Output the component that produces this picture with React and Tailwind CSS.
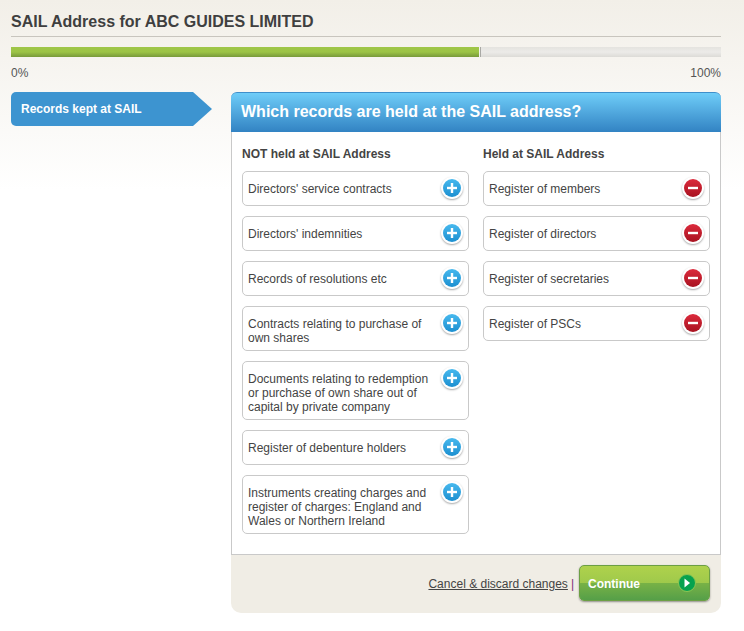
import React from 'react';

const NOT_HELD = [
  "Directors' service contracts",
  "Directors' indemnities",
  'Records of resolutions etc',
  'Contracts relating to purchase of own shares',
  'Documents relating to redemption or purchase of own share out of capital by private company',
  'Register of debenture holders',
  'Instruments creating charges and register of charges: England and Wales or Northern Ireland',
];

const HELD = ['Register of members', 'Register of directors', 'Register of secretaries', 'Register of PSCs'];

function RoundIcon({ type }) {
  const isAdd = type === 'add';
  return (
    <span className="mb-[1px] flex h-[22px] w-[22px] shrink-0 items-center justify-center rounded-full bg-white shadow-[0_1px_2px_rgba(0,0,0,0.35)]">
      <span className={`flex h-[18px] w-[18px] items-center justify-center rounded-full ${isAdd ? 'bg-gradient-to-b from-[#47b9ee] to-[#1b8fd0]' : 'bg-gradient-to-b from-[#dc2a3c] to-[#a81220]'}`}>
        <svg width="12" height="12" viewBox="0 0 12 12">
          {isAdd && <rect x="4.8" y="1" width="2.4" height="10" fill="#fff" />}
          <rect x="1" y="4.8" width="10" height="2.4" fill="#fff" />
        </svg>
      </span>
    </span>
  );
}

function RecordCard({ label, type }) {
  return (
    <div className="flex items-start justify-between rounded-[5px] border border-[#c9c9c9] bg-white pt-[5px] pr-[5px] pb-[5px] pl-[5px]">
      <span className="w-[186px] pt-[5px] text-[12px] leading-[14px] text-[#444]">{label}</span>
      <RoundIcon type={type} />
    </div>
  );
}

export default function App() {
  return (
    <div className="h-[631px] w-[744px] overflow-hidden bg-gradient-to-b from-[#f2efe8] to-white to-[190px] px-[11px] font-['Liberation_Sans',Arial,sans-serif] text-[#444]">
      <div className="w-[710px]">
        <h1 className="h-[37px] border-b border-[#c8c5be] pt-[13px] text-[16px] leading-[18px] font-bold text-[#3f3f3f]">
          SAIL Address for ABC GUIDES LIMITED
        </h1>

        <div className="mt-[10px] flex h-[10px] bg-gradient-to-b from-[#e4e3df] via-[#ecebe8] to-[#dcdbd7]">
          <div className="h-full w-[469px] border-r border-[#f4f3ef] bg-gradient-to-b from-[#9fc648] via-[#9cc446] to-[#789a3a]" />
          <div className="h-full w-[1px] bg-[#a9a9a5]" />
        </div>
        <div className="mt-[9px] flex justify-between text-[12px] leading-[14px] text-[#555]">
          <span>0%</span>
          <span>100%</span>
        </div>

        <div className="mt-[12px] flex items-start">
          <div className="h-[34px] w-[201px] shrink-0 rounded-l-[5px] bg-[#3d94d0] pt-[10px] pl-[10px] text-[12px] leading-[14px] font-bold text-white [clip-path:polygon(0_0,182px_0,100%_50%,182px_100%,0_100%)]">
            Records kept at SAIL
          </div>

          <div className="ml-[19px] w-[490px]">
            <div className="h-[40px] rounded-t-[6px] border-t border-[#3f8fcb] bg-gradient-to-b from-[#6fcdf8] to-[#3283c3] pt-[9px] pl-[10px] text-[16px] leading-[20px] font-bold text-white">
              Which records are held at the SAIL address?
            </div>

            <div className="flex h-[423px] gap-[14px] border-x border-b border-[#c9c9c9] bg-white pt-[15px] pl-[10px]">
              <div className="w-[227px]">
                <h2 className="mb-[10px] text-[12px] leading-[14px] font-bold">NOT held at SAIL Address</h2>
                <div className="flex flex-col gap-[10px]">
                  {NOT_HELD.map((label) => (
                    <RecordCard key={label} label={label} type="add" />
                  ))}
                </div>
              </div>
              <div className="w-[227px]">
                <h2 className="mb-[10px] text-[12px] leading-[14px] font-bold">Held at SAIL Address</h2>
                <div className="flex flex-col gap-[10px]">
                  {HELD.map((label) => (
                    <RecordCard key={label} label={label} type="remove" />
                  ))}
                </div>
              </div>
            </div>

            <div className="flex h-[58px] items-start justify-end rounded-b-[10px] bg-[#f0ede5] pt-[10px] pr-[11px]">
              <a className="mt-[12px] text-[12px] leading-[14px] text-[#444] underline">Cancel &amp; discard changes</a>
              <span className="mt-[12px] ml-[3px] text-[12px] leading-[14px] text-[#7a2f7a]">|</span>
              <button className="relative ml-[5px] flex h-[36px] w-[131px] items-center justify-between overflow-hidden rounded-[5px] border border-[#6c9f45] bg-gradient-to-b from-[#afd24c] to-[#8fc04a] pr-[13px] pl-[8px] shadow-[0_1px_2px_rgba(0,0,0,0.4)]">
                <span className="absolute inset-x-0 bottom-0 h-[17px] bg-gradient-to-b from-[#78b246] to-[#559f48]" />
                <span className="relative pt-[1px] text-[12px] leading-[14px] font-bold text-white">Continue</span>
                <span className="relative flex h-[18px] w-[18px] items-center justify-center rounded-full border border-[#8cc653] bg-[#06a24e]">
                  <svg width="8" height="10" viewBox="0 0 8 10">
                    <path d="M1.5 0.5 L7 5 L1.5 9.5 Z" fill="#fff" />
                  </svg>
                </span>
              </button>
            </div>
          </div>
        </div>
      </div>
    </div>
  );
}
